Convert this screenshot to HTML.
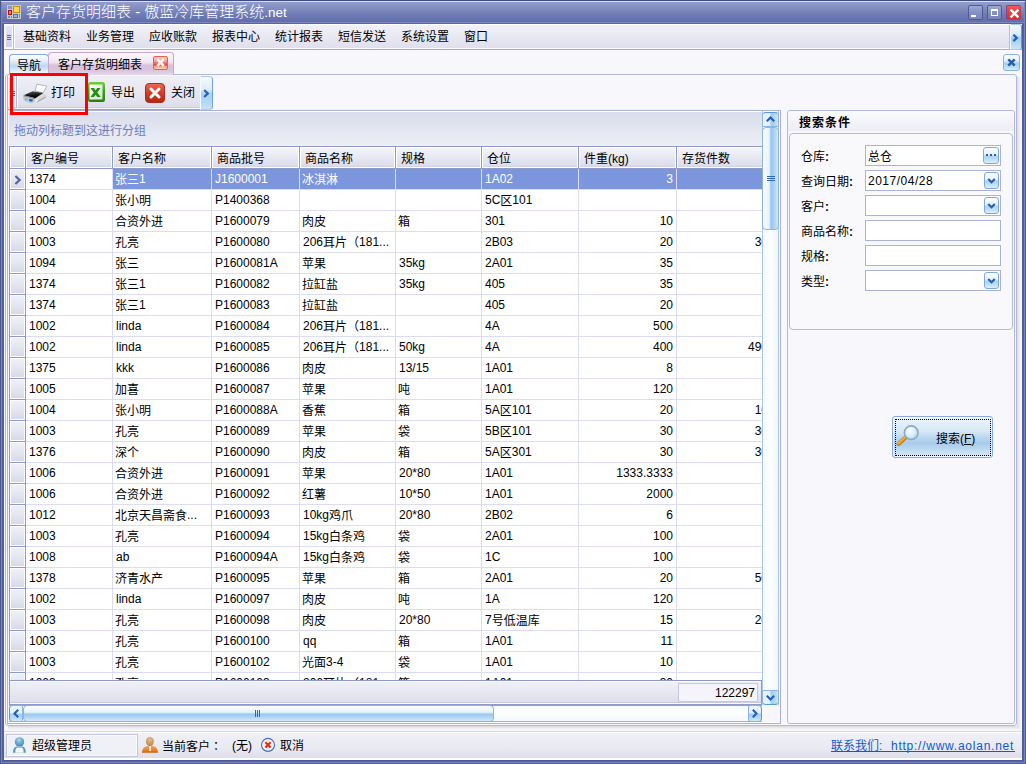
<!DOCTYPE html>
<html lang="zh-CN"><head><meta charset="utf-8"><title>客户存货明细表 - 傲蓝冷库管理系统.net</title>
<style>
*{box-sizing:border-box;margin:0;padding:0}
html,body{width:1026px;height:764px;overflow:hidden}
body{position:relative;background:#6774ae;font-family:"Liberation Sans","Noto Sans CJK SC",sans-serif;font-size:12px;color:#000;line-height:12px}
div,span,a,svg{position:absolute;white-space:nowrap}
.t{line-height:14px;height:14px}
#frame{left:0;top:0;width:1026px;height:764px;background:#525fa1}
#tb{left:0;top:0;width:1026px;height:24px;background:linear-gradient(#3d4a85 0,#3d4a85 1px,#d8dcee 1px,#d8dcee 2px,#939dc9 2px,#838ec0 8px,#7782b8 12px,#6c78b1 16px,#6470ae 21px,#6470ae 22px,#7a86bc 22px,#7a86bc 23px,#5865a4 23px)}
#title{left:26px;top:3px;font-size:15px;color:#fff;line-height:18px;font-weight:300}
.tbtn{top:5px;width:15px;height:15px;border-radius:2px;border:1px solid #4f5b98;background:linear-gradient(#9ea8d3,#8590c3 50%,#7783ba)}
.hd{background:linear-gradient(#f4f4fa,#e8e9f3 45%,#dddfec 90%,#cfd2e4);border:1px solid #fff}
.c{line-height:14px;height:14px;top:3px}
.k{position:relative;top:1px}
.row{left:10px;width:752px;height:21px}
.ind{left:0;top:0;width:15px;height:20px;background:linear-gradient(#eff0f7,#e4e6f1 50%,#d7d9e8);border:1px solid #fcfcfe}
.inp{background:#fff;border:1px solid #aab2d8;width:136px;height:20px;left:865px}
.ddb{border:1px solid #7fa8dc;border-radius:3px;background:linear-gradient(#fcfeff,#e2f1fc 45%,#a9d3f3 55%,#c4e1f7 80%,#dceefa)}
</style></head><body>
<div id="frame"></div><div id="tb"></div>
<div style="left:0px;top:0px;width:1px;height:764px;background:#4a568e"></div>
<div style="left:1px;top:2px;width:1px;height:761px;background:#7a86bc"></div>
<div style="left:1022px;top:24px;width:1px;height:737px;background:#505c98"></div>
<div style="left:1024px;top:2px;width:1px;height:761px;background:#7783bb"></div>
<div style="left:1025px;top:0px;width:1px;height:764px;background:#4f5b94"></div>
<div style="left:2px;top:760px;width:1021px;height:1px;background:#505c98"></div>
<div style="left:2px;top:762px;width:1023px;height:1px;background:#7884bb"></div>
<div style="left:0px;top:763px;width:1026px;height:1px;background:#4f5b94"></div>
<svg style="left:7px;top:5px" width="14" height="14" viewBox="0 0 14 14">
<rect x="0" y="0" width="14" height="14" fill="#c9c9c5"/>
<rect x="1" y="1" width="4" height="3" fill="#8a94c4"/>
<rect x="6" y="1" width="7" height="7" fill="#c99300"/><rect x="7" y="2" width="5" height="5" fill="#ffd54a"/>
<rect x="1" y="5" width="4" height="5" fill="#b81206"/><rect x="2" y="6" width="2" height="3" fill="#f07a72"/>
<rect x="6" y="9" width="5" height="4" fill="#3a78d8"/><rect x="7" y="10" width="3" height="2" fill="#8db8f6"/>
<rect x="1" y="11" width="2" height="2" fill="#7f8abd"/><rect x="4" y="11" width="1" height="2" fill="#7f8abd"/><rect x="12" y="9" width="1" height="4" fill="#7f8abd"/>
</svg>
<div id="title">客户存货明细表 - 傲蓝冷库管理系统<span style="position:static;font-size:13.5px">.net</span></div>
<div class="tbtn" style="left:968px"><div style="left:2px;top:9px;width:5px;height:2px;background:#fff"></div></div>
<div class="tbtn" style="left:987px"><div style="left:3px;top:3px;width:7px;height:7px;border:1px solid #fff;border-top-width:2px"></div></div>
<div class="tbtn" style="left:1006px;background:linear-gradient(#f25858,#e83c3c 50%,#dc2c2c);border-color:#7a4a80 #b04058 #c04050 #7a4a80">
<svg style="left:2px;top:2px" width="11" height="11" viewBox="0 0 11 11"><path d="M1.6 1.6 L9.4 9.4 M9.4 1.6 L1.6 9.4" stroke="#fff" stroke-width="2.3"/></svg></div>
<div style="left:4px;top:24px;width:1018px;height:736px;background:#f8f8fc"></div>
<div style="left:4px;top:24px;width:1018px;height:25px;background:linear-gradient(#f1f1f8,#dfe0ec);border-top:1px solid #fff;border-bottom:1px solid #fbfbfe"></div>
<div style="left:4px;top:49px;width:1018px;height:1px;background:#a3abd2"></div>
<div style="left:4px;top:25px;width:10px;height:23px;background:linear-gradient(#e6e7f2,#cfd2e6);border:2px solid #f6f6fb;border-top-width:1px;border-bottom-width:1px"></div>
<div style="left:7px;top:35px;width:4px;height:1px;background:#5d67a8;box-shadow:0 2px 0 #5d67a8,0 4px 0 #5d67a8"></div>
<div style="left:13px;top:25px;width:1px;height:24px;background:#b9bdd9"></div>
<div style="left:14px;top:25px;width:1px;height:24px;background:#fff"></div>
<div class="t" style="left:23px;top:30px;">基础资料</div>
<div class="t" style="left:86px;top:30px;">业务管理</div>
<div class="t" style="left:149px;top:30px;">应收账款</div>
<div class="t" style="left:212px;top:30px;">报表中心</div>
<div class="t" style="left:275px;top:30px;">统计报表</div>
<div class="t" style="left:338px;top:30px;">短信发送</div>
<div class="t" style="left:401px;top:30px;">系统设置</div>
<div class="t" style="left:464px;top:30px;">窗口</div>
<div style="left:1009px;top:25px;width:1px;height:24px;background:#b9bdd9"></div>
<div style="left:1010px;top:24px;width:12px;height:26px;border-radius:0 3px 3px 0;background:linear-gradient(#f4f9fe,#d8eaf9 40%,#9fcef0 55%,#b4d9f4 80%,#cfe6f8);border:1px solid #a9cbee;border-left-color:#eef6fd;border-right-color:#5f9adc"></div>
<svg style="left:1012px;top:34px" width="7" height="8" viewBox="0 0 7 8"><path d="M1.4 0.7 L4.8 3.9 L1.4 7.1" fill="none" stroke="#2660b4" stroke-width="2.2"/></svg>
<div style="left:5px;top:74px;width:1012px;height:652px;border:1px solid #b4b9d8;border-radius:3px;background:#f8f8fc"></div>
<div style="left:1017px;top:77px;width:4px;height:651px;background:linear-gradient(90deg,#d9d9dd,#ececf0 50%,#f8f8fb)"></div>
<div style="left:8px;top:726px;width:1012px;height:4px;background:linear-gradient(#d9d9dd,#ececf0 50%,#f8f8fb)"></div>
<div style="left:1017px;top:726px;width:4px;height:4px;background:radial-gradient(circle at 0 0,#d9d9dd,#f0f0f3 60%,#f8f8fb 100%)"></div>
<div style="left:7px;top:76px;width:1px;height:648px;background:#aeb4d6"></div>
<div style="left:7px;top:723px;width:3px;height:1px;background:#aeb4d6"></div>
<div style="left:9px;top:54px;width:40px;height:20px;border:1px solid #86a8d6;border-bottom:0;border-radius:4px 4px 0 0;background:linear-gradient(#ffffff,#e4f0fa 30%,#bcd8f0 58%,#dcecf9 82%,#fbfdff)"></div>
<div class="t" style="left:17px;top:59px;">导航</div>
<div style="left:48px;top:52px;width:126px;height:23px;border:1px solid #c9a6cf;border-bottom:0;border-radius:4px 4px 0 0;background:linear-gradient(#fbf8fb,#f0e6f2 42%,#d8c1dc 56%,#d9c5de 80%,#e6d8e9)"></div>
<div class="t" style="left:58px;top:58px;">客户存货明细表</div>
<div style="left:153px;top:56px;width:15px;height:14px;border:1px solid #e0624a;border-radius:2px;background:linear-gradient(#fdd0cc,#f79088 40%,#f0402c 66%,#f8a080 78%,#fcd4b8)"></div>
<svg style="left:156px;top:58px" width="9" height="9" viewBox="0 0 9 9"><path d="M1.2 1.2 L7.8 7.8 M7.8 1.2 L1.2 7.8" stroke="#fff" stroke-width="2.6"/></svg>
<div style="left:1003px;top:54px;width:17px;height:17px;border:1px solid #86b2e4;border-radius:3px;background:linear-gradient(#fcfeff,#dceefb 42%,#a2d0f1 55%,#bcddf5 80%,#d8ecfa)"></div>
<svg style="left:1007px;top:58px" width="9" height="9" viewBox="0 0 9 9"><path d="M1.3 1.3 L7.7 7.7 M7.7 1.3 L1.3 7.7" stroke="#245cae" stroke-width="2.5"/></svg>
<div style="left:8px;top:76px;width:192px;height:34px;background:linear-gradient(#efeff7,#e4e5f0 60%,#dcdde9);border-bottom:1px solid #9aa1cc"></div>
<div style="left:8px;top:107px;width:192px;height:1px;background:#c9cce2"></div>
<div style="left:8px;top:108px;width:192px;height:1px;background:#fbfbfe"></div>
<div style="left:8px;top:76px;width:9px;height:31px;background:#f1f1f8;border:1px solid #fafafd"></div>
<div style="left:9px;top:78px;width:1px;height:28px;background:#c5c9e2"></div>
<div style="left:13px;top:91px;width:2px;height:1px;background:#4a58a0;box-shadow:0 2px 0 #4a58a0,0 4px 0 #4a58a0"></div>
<div style="left:16px;top:76px;width:1px;height:32px;background:#b4b9d8"></div>
<div style="left:17px;top:76px;width:1px;height:32px;background:#fbfbfe"></div>
<div style="left:200px;top:76px;width:13px;height:34px;border:1px solid #a9cbee;border-left-color:#f4f9fe;border-right-color:#6fa2de;border-radius:0 4px 4px 0;background:linear-gradient(#f6fafe,#dcecfa 40%,#a6d0f0 52%,#b4d8f3 80%,#c8e3f7)"></div>
<svg style="left:203px;top:89px" width="7" height="9" viewBox="0 0 7 9"><path d="M1.2 1 L4.8 4.5 L1.2 8" fill="none" stroke="#2660b4" stroke-width="2.2"/></svg>
<svg style="left:18px;top:80px" width="34" height="26" viewBox="0 0 34 26">
<defs><linearGradient id="pk" x1="0" y1="0" x2="0.3" y2="1"><stop offset="0" stop-color="#6a6a6a"/><stop offset="0.6" stop-color="#1a1a1a"/><stop offset="1" stop-color="#000"/></linearGradient>
<linearGradient id="pb" x1="0" y1="0" x2="1" y2="0"><stop offset="0" stop-color="#4a9af0"/><stop offset="0.45" stop-color="#9adcd0"/><stop offset="0.55" stop-color="#2a9a4a"/><stop offset="0.7" stop-color="#0a5ad8"/><stop offset="1" stop-color="#2a7ae8"/></linearGradient></defs>
<path d="M18.9 4.2 L28.9 6.1 L25.2 12.8 L17 10.9 Z" fill="#fbfbfb" stroke="#a8a8a8" stroke-width="0.8"/>
<path d="M5.1 16 L17 19 L16.7 21.8 L12.9 23.6 L5.6 20.5 Z" fill="#c8c8c8"/>
<path d="M17 19 L25.2 12.9 L27.9 14.3 L27.9 17.7 L19 22.5 L16.8 21.2 Z" fill="#dadada"/>
<path d="M19 22.5 L27.9 17.7 L27.9 16.2 L19 20.8 Z" fill="#b0b0b0"/>
<path d="M5.6 15.3 L14.6 11.2 L25.2 12.9 L17.3 18.2 Z" fill="url(#pk)"/>
<path d="M5.6 15.3 L17.3 18.2 L17 19.3 L5.1 16.2 Z" fill="#8a8a8a"/>
<path d="M6.8 18.2 L15 19.6 L14.3 21.8 L7.5 20.3 Z" fill="url(#pb)"/>
<path d="M17.3 20.4 L19.6 19.2 L19.6 21 L18 21.8 Z" fill="#fff"/>
</svg>
<div class="t" style="left:51px;top:86px;">打印</div>
<svg style="left:88px;top:82px" width="17" height="20" viewBox="0 0 17 20">
<defs><linearGradient id="gg" x1="0" y1="0" x2="0" y2="1"><stop offset="0" stop-color="#72d03c"/><stop offset="0.5" stop-color="#3c9c18"/><stop offset="1" stop-color="#2a7e10"/></linearGradient>
<linearGradient id="wg" x1="0" y1="0" x2="1" y2="1"><stop offset="0" stop-color="#ffffff"/><stop offset="1" stop-color="#d4e0d0"/></linearGradient></defs>
<rect x="0" y="0" width="17" height="20" rx="2.5" fill="url(#gg)"/>
<rect x="1.5" y="2.5" width="13" height="15" fill="url(#wg)"/>
<path d="M2.5 6 L6 6 L7.6 8.4 L9.2 6 L12.5 6 L9.3 10.5 L12.7 15 L9.2 15 L7.6 12.6 L6 15 L2.5 15 L5.8 10.5 Z" fill="#23900c"/>
</svg>
<div class="t" style="left:111px;top:86px;">导出</div>
<svg style="left:145px;top:83px" width="20" height="20" viewBox="0 0 20 20">
<defs><linearGradient id="rg" x1="0" y1="0" x2="0" y2="1"><stop offset="0" stop-color="#ec6a54"/><stop offset="0.5" stop-color="#d23c24"/><stop offset="1" stop-color="#b42410"/></linearGradient></defs>
<rect x="0.5" y="0.5" width="19" height="19" rx="3.5" fill="url(#rg)" stroke="#a83020"/>
<path d="M6 6 L14 14 M14 6 L6 14" stroke="#fff" stroke-width="3" stroke-linecap="round"/>
</svg>
<div class="t" style="left:171px;top:86px;">关闭</div>
<div style="left:10px;top:73px;width:78px;height:42px;border:3px solid #ff0000;z-index:10"></div>
<div style="left:9px;top:110px;width:772px;height:614px;border:1px solid #a9b1d8;border-left:0;background:#fff"></div>
<div style="left:9px;top:146px;width:1px;height:559px;background:#8f9aca"></div>
<div style="left:9px;top:112px;width:753px;height:34px;background:linear-gradient(#d9dcea,#e4e6f1 55%,#eeeff6)"></div>
<div class="t" style="left:14px;top:124px;color:#6e7cba">拖动列标题到这进行分组</div>
<div style="left:10px;top:146px;width:752px;height:23px;background:#fff;border-top:1px solid #8f9aca;border-bottom:1px solid #8f9aca;overflow:hidden"><div class="hd" style="left:0;top:0;width:15px;height:21px"></div><div style="left:15px;top:0;width:1px;height:21px;background:#8f9aca"></div><div class="hd" style="left:16px;top:0;width:86px;height:21px"></div><div class="c" style="left:21px;top:5px">客户编号</div><div style="left:102px;top:0;width:1px;height:21px;background:#8f9aca"></div><div class="hd" style="left:103px;top:0;width:98px;height:21px"></div><div class="c" style="left:108px;top:5px">客户名称</div><div style="left:201px;top:0;width:1px;height:21px;background:#8f9aca"></div><div class="hd" style="left:202px;top:0;width:87px;height:21px"></div><div class="c" style="left:207px;top:5px">商品批号</div><div style="left:289px;top:0;width:1px;height:21px;background:#8f9aca"></div><div class="hd" style="left:290px;top:0;width:95px;height:21px"></div><div class="c" style="left:295px;top:5px">商品名称</div><div style="left:385px;top:0;width:1px;height:21px;background:#8f9aca"></div><div class="hd" style="left:386px;top:0;width:85px;height:21px"></div><div class="c" style="left:391px;top:5px">规格</div><div style="left:471px;top:0;width:1px;height:21px;background:#8f9aca"></div><div class="hd" style="left:472px;top:0;width:96px;height:21px"></div><div class="c" style="left:477px;top:5px">仓位</div><div style="left:568px;top:0;width:1px;height:21px;background:#8f9aca"></div><div class="hd" style="left:569px;top:0;width:97px;height:21px"></div><div class="c" style="left:574px;top:5px">件重(kg)</div><div style="left:666px;top:0;width:1px;height:21px;background:#8f9aca"></div><div class="hd" style="left:667px;top:0;width:94px;height:21px"></div><div class="c" style="left:672px;top:5px">存货件数</div></div>
<div style="left:10px;top:169px;width:752px;height:511px;overflow:hidden;background:#fff">
<div class="row" style="left:0;top:0px"><div class="ind"></div><div style="left:15px;top:0;width:1px;height:21px;background:#8f9aca"></div><svg style="left:4px;top:6px" width="8" height="10" viewBox="0 0 8 10"><path d="M1.4 1 L5.6 5 L1.4 9" fill="none" stroke="#5560a6" stroke-width="2.2"/></svg><div style="left:103px;top:0;width:650px;height:20px;background:#7b96dc"></div><div class="c" style="left:19px;width:82px;overflow:hidden;color:#000">1374</div><div style="left:102px;top:0;width:1px;height:21px;background:#dcdcf6"></div><div class="c" style="left:105px;width:95px;overflow:hidden;color:#fff"><span class="k">张三</span>1</div><div style="left:201px;top:0;width:1px;height:21px;background:#dcdcf6"></div><div class="c" style="left:205px;width:83px;overflow:hidden;color:#fff">J1600001</div><div style="left:289px;top:0;width:1px;height:21px;background:#dcdcf6"></div><div class="c" style="left:292px;width:92px;overflow:hidden;color:#fff"><span class="k">冰淇淋</span></div><div style="left:385px;top:0;width:1px;height:21px;background:#dcdcf6"></div><div class="c" style="left:389px;width:81px;overflow:hidden;color:#fff"></div><div style="left:471px;top:0;width:1px;height:21px;background:#dcdcf6"></div><div class="c" style="left:475px;width:92px;overflow:hidden;color:#fff">1A02</div><div style="left:568px;top:0;width:1px;height:21px;background:#dcdcf6"></div><div class="c" style="left:569px;width:94px;text-align:right;color:#fff">3</div><div style="left:666px;top:0;width:1px;height:21px;background:#dcdcf6"></div><div class="c" style="left:667px;width:91px;text-align:right;color:#fff"></div><div style="left:16px;top:20px;width:737px;height:1px;background:#dcdcf6"></div><div style="left:0px;top:20px;width:15px;height:1px;background:#8f9aca"></div></div>
<div class="row" style="left:0;top:21px"><div class="ind"></div><div style="left:15px;top:0;width:1px;height:21px;background:#8f9aca"></div><div class="c" style="left:19px;width:82px;overflow:hidden;color:#000">1004</div><div style="left:102px;top:0;width:1px;height:21px;background:#dcdcf6"></div><div class="c" style="left:105px;width:95px;overflow:hidden;color:#000"><span class="k">张小明</span></div><div style="left:201px;top:0;width:1px;height:21px;background:#dcdcf6"></div><div class="c" style="left:205px;width:83px;overflow:hidden;color:#000">P1400368</div><div style="left:289px;top:0;width:1px;height:21px;background:#dcdcf6"></div><div class="c" style="left:293px;width:91px;overflow:hidden;color:#000"></div><div style="left:385px;top:0;width:1px;height:21px;background:#dcdcf6"></div><div class="c" style="left:389px;width:81px;overflow:hidden;color:#000"></div><div style="left:471px;top:0;width:1px;height:21px;background:#dcdcf6"></div><div class="c" style="left:475px;width:92px;overflow:hidden;color:#000">5C<span class="k">区</span>101</div><div style="left:568px;top:0;width:1px;height:21px;background:#dcdcf6"></div><div class="c" style="left:569px;width:94px;text-align:right;color:#000"></div><div style="left:666px;top:0;width:1px;height:21px;background:#dcdcf6"></div><div class="c" style="left:667px;width:91px;text-align:right;color:#000"></div><div style="left:16px;top:20px;width:737px;height:1px;background:#dcdcf6"></div><div style="left:0px;top:20px;width:15px;height:1px;background:#8f9aca"></div></div>
<div class="row" style="left:0;top:42px"><div class="ind"></div><div style="left:15px;top:0;width:1px;height:21px;background:#8f9aca"></div><div class="c" style="left:19px;width:82px;overflow:hidden;color:#000">1006</div><div style="left:102px;top:0;width:1px;height:21px;background:#dcdcf6"></div><div class="c" style="left:105px;width:95px;overflow:hidden;color:#000"><span class="k">合资外进</span></div><div style="left:201px;top:0;width:1px;height:21px;background:#dcdcf6"></div><div class="c" style="left:205px;width:83px;overflow:hidden;color:#000">P1600079</div><div style="left:289px;top:0;width:1px;height:21px;background:#dcdcf6"></div><div class="c" style="left:292px;width:92px;overflow:hidden;color:#000"><span class="k">肉皮</span></div><div style="left:385px;top:0;width:1px;height:21px;background:#dcdcf6"></div><div class="c" style="left:388px;width:82px;overflow:hidden;color:#000"><span class="k">箱</span></div><div style="left:471px;top:0;width:1px;height:21px;background:#dcdcf6"></div><div class="c" style="left:475px;width:92px;overflow:hidden;color:#000">301</div><div style="left:568px;top:0;width:1px;height:21px;background:#dcdcf6"></div><div class="c" style="left:569px;width:94px;text-align:right;color:#000">10</div><div style="left:666px;top:0;width:1px;height:21px;background:#dcdcf6"></div><div class="c" style="left:667px;width:91px;text-align:right;color:#000"></div><div style="left:16px;top:20px;width:737px;height:1px;background:#dcdcf6"></div><div style="left:0px;top:20px;width:15px;height:1px;background:#8f9aca"></div></div>
<div class="row" style="left:0;top:63px"><div class="ind"></div><div style="left:15px;top:0;width:1px;height:21px;background:#8f9aca"></div><div class="c" style="left:19px;width:82px;overflow:hidden;color:#000">1003</div><div style="left:102px;top:0;width:1px;height:21px;background:#dcdcf6"></div><div class="c" style="left:105px;width:95px;overflow:hidden;color:#000"><span class="k">孔亮</span></div><div style="left:201px;top:0;width:1px;height:21px;background:#dcdcf6"></div><div class="c" style="left:205px;width:83px;overflow:hidden;color:#000">P1600080</div><div style="left:289px;top:0;width:1px;height:21px;background:#dcdcf6"></div><div class="c" style="left:293px;width:91px;overflow:hidden;color:#000">206<span class="k">耳片（</span>181...</div><div style="left:385px;top:0;width:1px;height:21px;background:#dcdcf6"></div><div class="c" style="left:389px;width:81px;overflow:hidden;color:#000"></div><div style="left:471px;top:0;width:1px;height:21px;background:#dcdcf6"></div><div class="c" style="left:475px;width:92px;overflow:hidden;color:#000">2B03</div><div style="left:568px;top:0;width:1px;height:21px;background:#dcdcf6"></div><div class="c" style="left:569px;width:94px;text-align:right;color:#000">20</div><div style="left:666px;top:0;width:1px;height:21px;background:#dcdcf6"></div><div class="c" style="left:667px;width:91px;text-align:right;color:#000">30</div><div style="left:16px;top:20px;width:737px;height:1px;background:#dcdcf6"></div><div style="left:0px;top:20px;width:15px;height:1px;background:#8f9aca"></div></div>
<div class="row" style="left:0;top:84px"><div class="ind"></div><div style="left:15px;top:0;width:1px;height:21px;background:#8f9aca"></div><div class="c" style="left:19px;width:82px;overflow:hidden;color:#000">1094</div><div style="left:102px;top:0;width:1px;height:21px;background:#dcdcf6"></div><div class="c" style="left:105px;width:95px;overflow:hidden;color:#000"><span class="k">张三</span></div><div style="left:201px;top:0;width:1px;height:21px;background:#dcdcf6"></div><div class="c" style="left:205px;width:83px;overflow:hidden;color:#000">P1600081A</div><div style="left:289px;top:0;width:1px;height:21px;background:#dcdcf6"></div><div class="c" style="left:292px;width:92px;overflow:hidden;color:#000"><span class="k">苹果</span></div><div style="left:385px;top:0;width:1px;height:21px;background:#dcdcf6"></div><div class="c" style="left:389px;width:81px;overflow:hidden;color:#000">35kg</div><div style="left:471px;top:0;width:1px;height:21px;background:#dcdcf6"></div><div class="c" style="left:475px;width:92px;overflow:hidden;color:#000">2A01</div><div style="left:568px;top:0;width:1px;height:21px;background:#dcdcf6"></div><div class="c" style="left:569px;width:94px;text-align:right;color:#000">35</div><div style="left:666px;top:0;width:1px;height:21px;background:#dcdcf6"></div><div class="c" style="left:667px;width:91px;text-align:right;color:#000"></div><div style="left:16px;top:20px;width:737px;height:1px;background:#dcdcf6"></div><div style="left:0px;top:20px;width:15px;height:1px;background:#8f9aca"></div></div>
<div class="row" style="left:0;top:105px"><div class="ind"></div><div style="left:15px;top:0;width:1px;height:21px;background:#8f9aca"></div><div class="c" style="left:19px;width:82px;overflow:hidden;color:#000">1374</div><div style="left:102px;top:0;width:1px;height:21px;background:#dcdcf6"></div><div class="c" style="left:105px;width:95px;overflow:hidden;color:#000"><span class="k">张三</span>1</div><div style="left:201px;top:0;width:1px;height:21px;background:#dcdcf6"></div><div class="c" style="left:205px;width:83px;overflow:hidden;color:#000">P1600082</div><div style="left:289px;top:0;width:1px;height:21px;background:#dcdcf6"></div><div class="c" style="left:292px;width:92px;overflow:hidden;color:#000"><span class="k">拉缸盐</span></div><div style="left:385px;top:0;width:1px;height:21px;background:#dcdcf6"></div><div class="c" style="left:389px;width:81px;overflow:hidden;color:#000">35kg</div><div style="left:471px;top:0;width:1px;height:21px;background:#dcdcf6"></div><div class="c" style="left:475px;width:92px;overflow:hidden;color:#000">405</div><div style="left:568px;top:0;width:1px;height:21px;background:#dcdcf6"></div><div class="c" style="left:569px;width:94px;text-align:right;color:#000">35</div><div style="left:666px;top:0;width:1px;height:21px;background:#dcdcf6"></div><div class="c" style="left:667px;width:91px;text-align:right;color:#000"></div><div style="left:16px;top:20px;width:737px;height:1px;background:#dcdcf6"></div><div style="left:0px;top:20px;width:15px;height:1px;background:#8f9aca"></div></div>
<div class="row" style="left:0;top:126px"><div class="ind"></div><div style="left:15px;top:0;width:1px;height:21px;background:#8f9aca"></div><div class="c" style="left:19px;width:82px;overflow:hidden;color:#000">1374</div><div style="left:102px;top:0;width:1px;height:21px;background:#dcdcf6"></div><div class="c" style="left:105px;width:95px;overflow:hidden;color:#000"><span class="k">张三</span>1</div><div style="left:201px;top:0;width:1px;height:21px;background:#dcdcf6"></div><div class="c" style="left:205px;width:83px;overflow:hidden;color:#000">P1600083</div><div style="left:289px;top:0;width:1px;height:21px;background:#dcdcf6"></div><div class="c" style="left:292px;width:92px;overflow:hidden;color:#000"><span class="k">拉缸盐</span></div><div style="left:385px;top:0;width:1px;height:21px;background:#dcdcf6"></div><div class="c" style="left:389px;width:81px;overflow:hidden;color:#000"></div><div style="left:471px;top:0;width:1px;height:21px;background:#dcdcf6"></div><div class="c" style="left:475px;width:92px;overflow:hidden;color:#000">405</div><div style="left:568px;top:0;width:1px;height:21px;background:#dcdcf6"></div><div class="c" style="left:569px;width:94px;text-align:right;color:#000">20</div><div style="left:666px;top:0;width:1px;height:21px;background:#dcdcf6"></div><div class="c" style="left:667px;width:91px;text-align:right;color:#000"></div><div style="left:16px;top:20px;width:737px;height:1px;background:#dcdcf6"></div><div style="left:0px;top:20px;width:15px;height:1px;background:#8f9aca"></div></div>
<div class="row" style="left:0;top:147px"><div class="ind"></div><div style="left:15px;top:0;width:1px;height:21px;background:#8f9aca"></div><div class="c" style="left:19px;width:82px;overflow:hidden;color:#000">1002</div><div style="left:102px;top:0;width:1px;height:21px;background:#dcdcf6"></div><div class="c" style="left:106px;width:94px;overflow:hidden;color:#000">linda</div><div style="left:201px;top:0;width:1px;height:21px;background:#dcdcf6"></div><div class="c" style="left:205px;width:83px;overflow:hidden;color:#000">P1600084</div><div style="left:289px;top:0;width:1px;height:21px;background:#dcdcf6"></div><div class="c" style="left:293px;width:91px;overflow:hidden;color:#000">206<span class="k">耳片（</span>181...</div><div style="left:385px;top:0;width:1px;height:21px;background:#dcdcf6"></div><div class="c" style="left:389px;width:81px;overflow:hidden;color:#000"></div><div style="left:471px;top:0;width:1px;height:21px;background:#dcdcf6"></div><div class="c" style="left:475px;width:92px;overflow:hidden;color:#000">4A</div><div style="left:568px;top:0;width:1px;height:21px;background:#dcdcf6"></div><div class="c" style="left:569px;width:94px;text-align:right;color:#000">500</div><div style="left:666px;top:0;width:1px;height:21px;background:#dcdcf6"></div><div class="c" style="left:667px;width:91px;text-align:right;color:#000"></div><div style="left:16px;top:20px;width:737px;height:1px;background:#dcdcf6"></div><div style="left:0px;top:20px;width:15px;height:1px;background:#8f9aca"></div></div>
<div class="row" style="left:0;top:168px"><div class="ind"></div><div style="left:15px;top:0;width:1px;height:21px;background:#8f9aca"></div><div class="c" style="left:19px;width:82px;overflow:hidden;color:#000">1002</div><div style="left:102px;top:0;width:1px;height:21px;background:#dcdcf6"></div><div class="c" style="left:106px;width:94px;overflow:hidden;color:#000">linda</div><div style="left:201px;top:0;width:1px;height:21px;background:#dcdcf6"></div><div class="c" style="left:205px;width:83px;overflow:hidden;color:#000">P1600085</div><div style="left:289px;top:0;width:1px;height:21px;background:#dcdcf6"></div><div class="c" style="left:293px;width:91px;overflow:hidden;color:#000">206<span class="k">耳片（</span>181...</div><div style="left:385px;top:0;width:1px;height:21px;background:#dcdcf6"></div><div class="c" style="left:389px;width:81px;overflow:hidden;color:#000">50kg</div><div style="left:471px;top:0;width:1px;height:21px;background:#dcdcf6"></div><div class="c" style="left:475px;width:92px;overflow:hidden;color:#000">4A</div><div style="left:568px;top:0;width:1px;height:21px;background:#dcdcf6"></div><div class="c" style="left:569px;width:94px;text-align:right;color:#000">400</div><div style="left:666px;top:0;width:1px;height:21px;background:#dcdcf6"></div><div class="c" style="left:667px;width:91px;text-align:right;color:#000">490</div><div style="left:16px;top:20px;width:737px;height:1px;background:#dcdcf6"></div><div style="left:0px;top:20px;width:15px;height:1px;background:#8f9aca"></div></div>
<div class="row" style="left:0;top:189px"><div class="ind"></div><div style="left:15px;top:0;width:1px;height:21px;background:#8f9aca"></div><div class="c" style="left:19px;width:82px;overflow:hidden;color:#000">1375</div><div style="left:102px;top:0;width:1px;height:21px;background:#dcdcf6"></div><div class="c" style="left:106px;width:94px;overflow:hidden;color:#000">kkk</div><div style="left:201px;top:0;width:1px;height:21px;background:#dcdcf6"></div><div class="c" style="left:205px;width:83px;overflow:hidden;color:#000">P1600086</div><div style="left:289px;top:0;width:1px;height:21px;background:#dcdcf6"></div><div class="c" style="left:292px;width:92px;overflow:hidden;color:#000"><span class="k">肉皮</span></div><div style="left:385px;top:0;width:1px;height:21px;background:#dcdcf6"></div><div class="c" style="left:389px;width:81px;overflow:hidden;color:#000">13/15</div><div style="left:471px;top:0;width:1px;height:21px;background:#dcdcf6"></div><div class="c" style="left:475px;width:92px;overflow:hidden;color:#000">1A01</div><div style="left:568px;top:0;width:1px;height:21px;background:#dcdcf6"></div><div class="c" style="left:569px;width:94px;text-align:right;color:#000">8</div><div style="left:666px;top:0;width:1px;height:21px;background:#dcdcf6"></div><div class="c" style="left:667px;width:91px;text-align:right;color:#000"></div><div style="left:16px;top:20px;width:737px;height:1px;background:#dcdcf6"></div><div style="left:0px;top:20px;width:15px;height:1px;background:#8f9aca"></div></div>
<div class="row" style="left:0;top:210px"><div class="ind"></div><div style="left:15px;top:0;width:1px;height:21px;background:#8f9aca"></div><div class="c" style="left:19px;width:82px;overflow:hidden;color:#000">1005</div><div style="left:102px;top:0;width:1px;height:21px;background:#dcdcf6"></div><div class="c" style="left:105px;width:95px;overflow:hidden;color:#000"><span class="k">加喜</span></div><div style="left:201px;top:0;width:1px;height:21px;background:#dcdcf6"></div><div class="c" style="left:205px;width:83px;overflow:hidden;color:#000">P1600087</div><div style="left:289px;top:0;width:1px;height:21px;background:#dcdcf6"></div><div class="c" style="left:292px;width:92px;overflow:hidden;color:#000"><span class="k">苹果</span></div><div style="left:385px;top:0;width:1px;height:21px;background:#dcdcf6"></div><div class="c" style="left:388px;width:82px;overflow:hidden;color:#000"><span class="k">吨</span></div><div style="left:471px;top:0;width:1px;height:21px;background:#dcdcf6"></div><div class="c" style="left:475px;width:92px;overflow:hidden;color:#000">1A01</div><div style="left:568px;top:0;width:1px;height:21px;background:#dcdcf6"></div><div class="c" style="left:569px;width:94px;text-align:right;color:#000">120</div><div style="left:666px;top:0;width:1px;height:21px;background:#dcdcf6"></div><div class="c" style="left:667px;width:91px;text-align:right;color:#000"></div><div style="left:16px;top:20px;width:737px;height:1px;background:#dcdcf6"></div><div style="left:0px;top:20px;width:15px;height:1px;background:#8f9aca"></div></div>
<div class="row" style="left:0;top:231px"><div class="ind"></div><div style="left:15px;top:0;width:1px;height:21px;background:#8f9aca"></div><div class="c" style="left:19px;width:82px;overflow:hidden;color:#000">1004</div><div style="left:102px;top:0;width:1px;height:21px;background:#dcdcf6"></div><div class="c" style="left:105px;width:95px;overflow:hidden;color:#000"><span class="k">张小明</span></div><div style="left:201px;top:0;width:1px;height:21px;background:#dcdcf6"></div><div class="c" style="left:205px;width:83px;overflow:hidden;color:#000">P1600088A</div><div style="left:289px;top:0;width:1px;height:21px;background:#dcdcf6"></div><div class="c" style="left:292px;width:92px;overflow:hidden;color:#000"><span class="k">香蕉</span></div><div style="left:385px;top:0;width:1px;height:21px;background:#dcdcf6"></div><div class="c" style="left:388px;width:82px;overflow:hidden;color:#000"><span class="k">箱</span></div><div style="left:471px;top:0;width:1px;height:21px;background:#dcdcf6"></div><div class="c" style="left:475px;width:92px;overflow:hidden;color:#000">5A<span class="k">区</span>101</div><div style="left:568px;top:0;width:1px;height:21px;background:#dcdcf6"></div><div class="c" style="left:569px;width:94px;text-align:right;color:#000">20</div><div style="left:666px;top:0;width:1px;height:21px;background:#dcdcf6"></div><div class="c" style="left:667px;width:91px;text-align:right;color:#000">10</div><div style="left:16px;top:20px;width:737px;height:1px;background:#dcdcf6"></div><div style="left:0px;top:20px;width:15px;height:1px;background:#8f9aca"></div></div>
<div class="row" style="left:0;top:252px"><div class="ind"></div><div style="left:15px;top:0;width:1px;height:21px;background:#8f9aca"></div><div class="c" style="left:19px;width:82px;overflow:hidden;color:#000">1003</div><div style="left:102px;top:0;width:1px;height:21px;background:#dcdcf6"></div><div class="c" style="left:105px;width:95px;overflow:hidden;color:#000"><span class="k">孔亮</span></div><div style="left:201px;top:0;width:1px;height:21px;background:#dcdcf6"></div><div class="c" style="left:205px;width:83px;overflow:hidden;color:#000">P1600089</div><div style="left:289px;top:0;width:1px;height:21px;background:#dcdcf6"></div><div class="c" style="left:292px;width:92px;overflow:hidden;color:#000"><span class="k">苹果</span></div><div style="left:385px;top:0;width:1px;height:21px;background:#dcdcf6"></div><div class="c" style="left:388px;width:82px;overflow:hidden;color:#000"><span class="k">袋</span></div><div style="left:471px;top:0;width:1px;height:21px;background:#dcdcf6"></div><div class="c" style="left:475px;width:92px;overflow:hidden;color:#000">5B<span class="k">区</span>101</div><div style="left:568px;top:0;width:1px;height:21px;background:#dcdcf6"></div><div class="c" style="left:569px;width:94px;text-align:right;color:#000">30</div><div style="left:666px;top:0;width:1px;height:21px;background:#dcdcf6"></div><div class="c" style="left:667px;width:91px;text-align:right;color:#000">30</div><div style="left:16px;top:20px;width:737px;height:1px;background:#dcdcf6"></div><div style="left:0px;top:20px;width:15px;height:1px;background:#8f9aca"></div></div>
<div class="row" style="left:0;top:273px"><div class="ind"></div><div style="left:15px;top:0;width:1px;height:21px;background:#8f9aca"></div><div class="c" style="left:19px;width:82px;overflow:hidden;color:#000">1376</div><div style="left:102px;top:0;width:1px;height:21px;background:#dcdcf6"></div><div class="c" style="left:105px;width:95px;overflow:hidden;color:#000"><span class="k">深个</span></div><div style="left:201px;top:0;width:1px;height:21px;background:#dcdcf6"></div><div class="c" style="left:205px;width:83px;overflow:hidden;color:#000">P1600090</div><div style="left:289px;top:0;width:1px;height:21px;background:#dcdcf6"></div><div class="c" style="left:292px;width:92px;overflow:hidden;color:#000"><span class="k">肉皮</span></div><div style="left:385px;top:0;width:1px;height:21px;background:#dcdcf6"></div><div class="c" style="left:388px;width:82px;overflow:hidden;color:#000"><span class="k">箱</span></div><div style="left:471px;top:0;width:1px;height:21px;background:#dcdcf6"></div><div class="c" style="left:475px;width:92px;overflow:hidden;color:#000">5A<span class="k">区</span>301</div><div style="left:568px;top:0;width:1px;height:21px;background:#dcdcf6"></div><div class="c" style="left:569px;width:94px;text-align:right;color:#000">30</div><div style="left:666px;top:0;width:1px;height:21px;background:#dcdcf6"></div><div class="c" style="left:667px;width:91px;text-align:right;color:#000">30</div><div style="left:16px;top:20px;width:737px;height:1px;background:#dcdcf6"></div><div style="left:0px;top:20px;width:15px;height:1px;background:#8f9aca"></div></div>
<div class="row" style="left:0;top:294px"><div class="ind"></div><div style="left:15px;top:0;width:1px;height:21px;background:#8f9aca"></div><div class="c" style="left:19px;width:82px;overflow:hidden;color:#000">1006</div><div style="left:102px;top:0;width:1px;height:21px;background:#dcdcf6"></div><div class="c" style="left:105px;width:95px;overflow:hidden;color:#000"><span class="k">合资外进</span></div><div style="left:201px;top:0;width:1px;height:21px;background:#dcdcf6"></div><div class="c" style="left:205px;width:83px;overflow:hidden;color:#000">P1600091</div><div style="left:289px;top:0;width:1px;height:21px;background:#dcdcf6"></div><div class="c" style="left:292px;width:92px;overflow:hidden;color:#000"><span class="k">苹果</span></div><div style="left:385px;top:0;width:1px;height:21px;background:#dcdcf6"></div><div class="c" style="left:389px;width:81px;overflow:hidden;color:#000">20*80</div><div style="left:471px;top:0;width:1px;height:21px;background:#dcdcf6"></div><div class="c" style="left:475px;width:92px;overflow:hidden;color:#000">1A01</div><div style="left:568px;top:0;width:1px;height:21px;background:#dcdcf6"></div><div class="c" style="left:569px;width:94px;text-align:right;color:#000">1333.3333</div><div style="left:666px;top:0;width:1px;height:21px;background:#dcdcf6"></div><div class="c" style="left:667px;width:91px;text-align:right;color:#000"></div><div style="left:16px;top:20px;width:737px;height:1px;background:#dcdcf6"></div><div style="left:0px;top:20px;width:15px;height:1px;background:#8f9aca"></div></div>
<div class="row" style="left:0;top:315px"><div class="ind"></div><div style="left:15px;top:0;width:1px;height:21px;background:#8f9aca"></div><div class="c" style="left:19px;width:82px;overflow:hidden;color:#000">1006</div><div style="left:102px;top:0;width:1px;height:21px;background:#dcdcf6"></div><div class="c" style="left:105px;width:95px;overflow:hidden;color:#000"><span class="k">合资外进</span></div><div style="left:201px;top:0;width:1px;height:21px;background:#dcdcf6"></div><div class="c" style="left:205px;width:83px;overflow:hidden;color:#000">P1600092</div><div style="left:289px;top:0;width:1px;height:21px;background:#dcdcf6"></div><div class="c" style="left:292px;width:92px;overflow:hidden;color:#000"><span class="k">红薯</span></div><div style="left:385px;top:0;width:1px;height:21px;background:#dcdcf6"></div><div class="c" style="left:389px;width:81px;overflow:hidden;color:#000">10*50</div><div style="left:471px;top:0;width:1px;height:21px;background:#dcdcf6"></div><div class="c" style="left:475px;width:92px;overflow:hidden;color:#000">1A01</div><div style="left:568px;top:0;width:1px;height:21px;background:#dcdcf6"></div><div class="c" style="left:569px;width:94px;text-align:right;color:#000">2000</div><div style="left:666px;top:0;width:1px;height:21px;background:#dcdcf6"></div><div class="c" style="left:667px;width:91px;text-align:right;color:#000"></div><div style="left:16px;top:20px;width:737px;height:1px;background:#dcdcf6"></div><div style="left:0px;top:20px;width:15px;height:1px;background:#8f9aca"></div></div>
<div class="row" style="left:0;top:336px"><div class="ind"></div><div style="left:15px;top:0;width:1px;height:21px;background:#8f9aca"></div><div class="c" style="left:19px;width:82px;overflow:hidden;color:#000">1012</div><div style="left:102px;top:0;width:1px;height:21px;background:#dcdcf6"></div><div class="c" style="left:105px;width:95px;overflow:hidden;color:#000"><span class="k">北京天昌斋食</span>...</div><div style="left:201px;top:0;width:1px;height:21px;background:#dcdcf6"></div><div class="c" style="left:205px;width:83px;overflow:hidden;color:#000">P1600093</div><div style="left:289px;top:0;width:1px;height:21px;background:#dcdcf6"></div><div class="c" style="left:293px;width:91px;overflow:hidden;color:#000">10kg<span class="k">鸡爪</span></div><div style="left:385px;top:0;width:1px;height:21px;background:#dcdcf6"></div><div class="c" style="left:389px;width:81px;overflow:hidden;color:#000">20*80</div><div style="left:471px;top:0;width:1px;height:21px;background:#dcdcf6"></div><div class="c" style="left:475px;width:92px;overflow:hidden;color:#000">2B02</div><div style="left:568px;top:0;width:1px;height:21px;background:#dcdcf6"></div><div class="c" style="left:569px;width:94px;text-align:right;color:#000">6</div><div style="left:666px;top:0;width:1px;height:21px;background:#dcdcf6"></div><div class="c" style="left:667px;width:91px;text-align:right;color:#000"></div><div style="left:16px;top:20px;width:737px;height:1px;background:#dcdcf6"></div><div style="left:0px;top:20px;width:15px;height:1px;background:#8f9aca"></div></div>
<div class="row" style="left:0;top:357px"><div class="ind"></div><div style="left:15px;top:0;width:1px;height:21px;background:#8f9aca"></div><div class="c" style="left:19px;width:82px;overflow:hidden;color:#000">1003</div><div style="left:102px;top:0;width:1px;height:21px;background:#dcdcf6"></div><div class="c" style="left:105px;width:95px;overflow:hidden;color:#000"><span class="k">孔亮</span></div><div style="left:201px;top:0;width:1px;height:21px;background:#dcdcf6"></div><div class="c" style="left:205px;width:83px;overflow:hidden;color:#000">P1600094</div><div style="left:289px;top:0;width:1px;height:21px;background:#dcdcf6"></div><div class="c" style="left:293px;width:91px;overflow:hidden;color:#000">15kg<span class="k">白条鸡</span></div><div style="left:385px;top:0;width:1px;height:21px;background:#dcdcf6"></div><div class="c" style="left:388px;width:82px;overflow:hidden;color:#000"><span class="k">袋</span></div><div style="left:471px;top:0;width:1px;height:21px;background:#dcdcf6"></div><div class="c" style="left:475px;width:92px;overflow:hidden;color:#000">2A01</div><div style="left:568px;top:0;width:1px;height:21px;background:#dcdcf6"></div><div class="c" style="left:569px;width:94px;text-align:right;color:#000">100</div><div style="left:666px;top:0;width:1px;height:21px;background:#dcdcf6"></div><div class="c" style="left:667px;width:91px;text-align:right;color:#000"></div><div style="left:16px;top:20px;width:737px;height:1px;background:#dcdcf6"></div><div style="left:0px;top:20px;width:15px;height:1px;background:#8f9aca"></div></div>
<div class="row" style="left:0;top:378px"><div class="ind"></div><div style="left:15px;top:0;width:1px;height:21px;background:#8f9aca"></div><div class="c" style="left:19px;width:82px;overflow:hidden;color:#000">1008</div><div style="left:102px;top:0;width:1px;height:21px;background:#dcdcf6"></div><div class="c" style="left:106px;width:94px;overflow:hidden;color:#000">ab</div><div style="left:201px;top:0;width:1px;height:21px;background:#dcdcf6"></div><div class="c" style="left:205px;width:83px;overflow:hidden;color:#000">P1600094A</div><div style="left:289px;top:0;width:1px;height:21px;background:#dcdcf6"></div><div class="c" style="left:293px;width:91px;overflow:hidden;color:#000">15kg<span class="k">白条鸡</span></div><div style="left:385px;top:0;width:1px;height:21px;background:#dcdcf6"></div><div class="c" style="left:388px;width:82px;overflow:hidden;color:#000"><span class="k">袋</span></div><div style="left:471px;top:0;width:1px;height:21px;background:#dcdcf6"></div><div class="c" style="left:475px;width:92px;overflow:hidden;color:#000">1C</div><div style="left:568px;top:0;width:1px;height:21px;background:#dcdcf6"></div><div class="c" style="left:569px;width:94px;text-align:right;color:#000">100</div><div style="left:666px;top:0;width:1px;height:21px;background:#dcdcf6"></div><div class="c" style="left:667px;width:91px;text-align:right;color:#000"></div><div style="left:16px;top:20px;width:737px;height:1px;background:#dcdcf6"></div><div style="left:0px;top:20px;width:15px;height:1px;background:#8f9aca"></div></div>
<div class="row" style="left:0;top:399px"><div class="ind"></div><div style="left:15px;top:0;width:1px;height:21px;background:#8f9aca"></div><div class="c" style="left:19px;width:82px;overflow:hidden;color:#000">1378</div><div style="left:102px;top:0;width:1px;height:21px;background:#dcdcf6"></div><div class="c" style="left:105px;width:95px;overflow:hidden;color:#000"><span class="k">济青水产</span></div><div style="left:201px;top:0;width:1px;height:21px;background:#dcdcf6"></div><div class="c" style="left:205px;width:83px;overflow:hidden;color:#000">P1600095</div><div style="left:289px;top:0;width:1px;height:21px;background:#dcdcf6"></div><div class="c" style="left:292px;width:92px;overflow:hidden;color:#000"><span class="k">苹果</span></div><div style="left:385px;top:0;width:1px;height:21px;background:#dcdcf6"></div><div class="c" style="left:388px;width:82px;overflow:hidden;color:#000"><span class="k">箱</span></div><div style="left:471px;top:0;width:1px;height:21px;background:#dcdcf6"></div><div class="c" style="left:475px;width:92px;overflow:hidden;color:#000">2A01</div><div style="left:568px;top:0;width:1px;height:21px;background:#dcdcf6"></div><div class="c" style="left:569px;width:94px;text-align:right;color:#000">20</div><div style="left:666px;top:0;width:1px;height:21px;background:#dcdcf6"></div><div class="c" style="left:667px;width:91px;text-align:right;color:#000">50</div><div style="left:16px;top:20px;width:737px;height:1px;background:#dcdcf6"></div><div style="left:0px;top:20px;width:15px;height:1px;background:#8f9aca"></div></div>
<div class="row" style="left:0;top:420px"><div class="ind"></div><div style="left:15px;top:0;width:1px;height:21px;background:#8f9aca"></div><div class="c" style="left:19px;width:82px;overflow:hidden;color:#000">1002</div><div style="left:102px;top:0;width:1px;height:21px;background:#dcdcf6"></div><div class="c" style="left:106px;width:94px;overflow:hidden;color:#000">linda</div><div style="left:201px;top:0;width:1px;height:21px;background:#dcdcf6"></div><div class="c" style="left:205px;width:83px;overflow:hidden;color:#000">P1600097</div><div style="left:289px;top:0;width:1px;height:21px;background:#dcdcf6"></div><div class="c" style="left:292px;width:92px;overflow:hidden;color:#000"><span class="k">肉皮</span></div><div style="left:385px;top:0;width:1px;height:21px;background:#dcdcf6"></div><div class="c" style="left:388px;width:82px;overflow:hidden;color:#000"><span class="k">吨</span></div><div style="left:471px;top:0;width:1px;height:21px;background:#dcdcf6"></div><div class="c" style="left:475px;width:92px;overflow:hidden;color:#000">1A</div><div style="left:568px;top:0;width:1px;height:21px;background:#dcdcf6"></div><div class="c" style="left:569px;width:94px;text-align:right;color:#000">120</div><div style="left:666px;top:0;width:1px;height:21px;background:#dcdcf6"></div><div class="c" style="left:667px;width:91px;text-align:right;color:#000"></div><div style="left:16px;top:20px;width:737px;height:1px;background:#dcdcf6"></div><div style="left:0px;top:20px;width:15px;height:1px;background:#8f9aca"></div></div>
<div class="row" style="left:0;top:441px"><div class="ind"></div><div style="left:15px;top:0;width:1px;height:21px;background:#8f9aca"></div><div class="c" style="left:19px;width:82px;overflow:hidden;color:#000">1003</div><div style="left:102px;top:0;width:1px;height:21px;background:#dcdcf6"></div><div class="c" style="left:105px;width:95px;overflow:hidden;color:#000"><span class="k">孔亮</span></div><div style="left:201px;top:0;width:1px;height:21px;background:#dcdcf6"></div><div class="c" style="left:205px;width:83px;overflow:hidden;color:#000">P1600098</div><div style="left:289px;top:0;width:1px;height:21px;background:#dcdcf6"></div><div class="c" style="left:292px;width:92px;overflow:hidden;color:#000"><span class="k">肉皮</span></div><div style="left:385px;top:0;width:1px;height:21px;background:#dcdcf6"></div><div class="c" style="left:389px;width:81px;overflow:hidden;color:#000">20*80</div><div style="left:471px;top:0;width:1px;height:21px;background:#dcdcf6"></div><div class="c" style="left:475px;width:92px;overflow:hidden;color:#000">7<span class="k">号低温库</span></div><div style="left:568px;top:0;width:1px;height:21px;background:#dcdcf6"></div><div class="c" style="left:569px;width:94px;text-align:right;color:#000">15</div><div style="left:666px;top:0;width:1px;height:21px;background:#dcdcf6"></div><div class="c" style="left:667px;width:91px;text-align:right;color:#000">20</div><div style="left:16px;top:20px;width:737px;height:1px;background:#dcdcf6"></div><div style="left:0px;top:20px;width:15px;height:1px;background:#8f9aca"></div></div>
<div class="row" style="left:0;top:462px"><div class="ind"></div><div style="left:15px;top:0;width:1px;height:21px;background:#8f9aca"></div><div class="c" style="left:19px;width:82px;overflow:hidden;color:#000">1003</div><div style="left:102px;top:0;width:1px;height:21px;background:#dcdcf6"></div><div class="c" style="left:105px;width:95px;overflow:hidden;color:#000"><span class="k">孔亮</span></div><div style="left:201px;top:0;width:1px;height:21px;background:#dcdcf6"></div><div class="c" style="left:205px;width:83px;overflow:hidden;color:#000">P1600100</div><div style="left:289px;top:0;width:1px;height:21px;background:#dcdcf6"></div><div class="c" style="left:293px;width:91px;overflow:hidden;color:#000">qq</div><div style="left:385px;top:0;width:1px;height:21px;background:#dcdcf6"></div><div class="c" style="left:388px;width:82px;overflow:hidden;color:#000"><span class="k">箱</span></div><div style="left:471px;top:0;width:1px;height:21px;background:#dcdcf6"></div><div class="c" style="left:475px;width:92px;overflow:hidden;color:#000">1A01</div><div style="left:568px;top:0;width:1px;height:21px;background:#dcdcf6"></div><div class="c" style="left:569px;width:94px;text-align:right;color:#000">11</div><div style="left:666px;top:0;width:1px;height:21px;background:#dcdcf6"></div><div class="c" style="left:667px;width:91px;text-align:right;color:#000"></div><div style="left:16px;top:20px;width:737px;height:1px;background:#dcdcf6"></div><div style="left:0px;top:20px;width:15px;height:1px;background:#8f9aca"></div></div>
<div class="row" style="left:0;top:483px"><div class="ind"></div><div style="left:15px;top:0;width:1px;height:21px;background:#8f9aca"></div><div class="c" style="left:19px;width:82px;overflow:hidden;color:#000">1003</div><div style="left:102px;top:0;width:1px;height:21px;background:#dcdcf6"></div><div class="c" style="left:105px;width:95px;overflow:hidden;color:#000"><span class="k">孔亮</span></div><div style="left:201px;top:0;width:1px;height:21px;background:#dcdcf6"></div><div class="c" style="left:205px;width:83px;overflow:hidden;color:#000">P1600102</div><div style="left:289px;top:0;width:1px;height:21px;background:#dcdcf6"></div><div class="c" style="left:292px;width:92px;overflow:hidden;color:#000"><span class="k">光面</span>3-4</div><div style="left:385px;top:0;width:1px;height:21px;background:#dcdcf6"></div><div class="c" style="left:388px;width:82px;overflow:hidden;color:#000"><span class="k">袋</span></div><div style="left:471px;top:0;width:1px;height:21px;background:#dcdcf6"></div><div class="c" style="left:475px;width:92px;overflow:hidden;color:#000">1A01</div><div style="left:568px;top:0;width:1px;height:21px;background:#dcdcf6"></div><div class="c" style="left:569px;width:94px;text-align:right;color:#000">10</div><div style="left:666px;top:0;width:1px;height:21px;background:#dcdcf6"></div><div class="c" style="left:667px;width:91px;text-align:right;color:#000"></div><div style="left:16px;top:20px;width:737px;height:1px;background:#dcdcf6"></div><div style="left:0px;top:20px;width:15px;height:1px;background:#8f9aca"></div></div>
<div class="row" style="left:0;top:504px"><div class="ind"></div><div style="left:15px;top:0;width:1px;height:21px;background:#8f9aca"></div><div class="c" style="left:19px;width:82px;overflow:hidden;color:#000">1003</div><div style="left:102px;top:0;width:1px;height:21px;background:#dcdcf6"></div><div class="c" style="left:105px;width:95px;overflow:hidden;color:#000"><span class="k">孔亮</span></div><div style="left:201px;top:0;width:1px;height:21px;background:#dcdcf6"></div><div class="c" style="left:205px;width:83px;overflow:hidden;color:#000">P1600103</div><div style="left:289px;top:0;width:1px;height:21px;background:#dcdcf6"></div><div class="c" style="left:293px;width:91px;overflow:hidden;color:#000">206<span class="k">耳片（</span>181...</div><div style="left:385px;top:0;width:1px;height:21px;background:#dcdcf6"></div><div class="c" style="left:388px;width:82px;overflow:hidden;color:#000"><span class="k">箱</span></div><div style="left:471px;top:0;width:1px;height:21px;background:#dcdcf6"></div><div class="c" style="left:475px;width:92px;overflow:hidden;color:#000">1A01</div><div style="left:568px;top:0;width:1px;height:21px;background:#dcdcf6"></div><div class="c" style="left:569px;width:94px;text-align:right;color:#000">30</div><div style="left:666px;top:0;width:1px;height:21px;background:#dcdcf6"></div><div class="c" style="left:667px;width:91px;text-align:right;color:#000"></div><div style="left:16px;top:20px;width:737px;height:1px;background:#dcdcf6"></div><div style="left:0px;top:20px;width:15px;height:1px;background:#8f9aca"></div></div>
</div>
<div style="left:10px;top:680px;width:752px;height:25px;background:linear-gradient(#f1f1f8,#e6e7f1 50%,#dcdde9);border:1px solid #8f9aca;border-left:0"></div>
<div style="left:10px;top:702px;width:751px;height:1px;background:#c9cce1"></div>
<div style="left:10px;top:703px;width:751px;height:1px;background:#fbfbfe"></div>
<div style="left:10px;top:681px;width:751px;height:1px;background:#fbfbfe"></div>
<div style="left:678px;top:683px;width:80px;height:19px;background:#f4f4fa;border:1px solid #c5c9e0"></div>
<div class="t" style="left:678px;top:686px;width:77px;text-align:right">122297</div>
<div style="left:762px;top:111px;width:17px;height:594px;background:linear-gradient(90deg,#f6fafe,#fdfeff 50%,#eef6fc);border-left:1px solid #a9c6e8;border-right:1px solid #a9c6e8"></div>
<div style="left:762px;top:112px;width:17px;height:15px;border:1px solid #8db4e3;border-top-color:#5f96d6;border-radius:4px 4px 2px 2px;background:linear-gradient(90deg,#eaf4fc,#e0effb 45%,#c2dff5 50%,#9fcdef 55%,#b9daf3 85%,#cfe6f7)"></div>
<svg style="left:766px;top:116px" width="9" height="6" viewBox="0 0 9 6"><path d="M0.8 5.2 L4.5 1.5 L8.2 5.2" fill="none" stroke="#215fb0" stroke-width="2.1"/></svg>
<div style="left:762px;top:127px;width:17px;height:103px;border:1px solid #8db4e3;border-radius:4px;background:linear-gradient(90deg,#fafdff,#eaf4fc 35%,#d3e8f8 48%,#93c5ed 51%,#acd3f1 75%,#d2e7f8)"></div>
<div style="left:767px;top:176px;width:8px;height:1px;background:#2f67b4;box-shadow:0 2px 0 #2f67b4,0 4px 0 #2f67b4"></div>
<div style="left:762px;top:690px;width:17px;height:15px;border:1px solid #8db4e3;border-bottom-color:#5f96d6;border-radius:2px 2px 4px 4px;background:linear-gradient(90deg,#eaf4fc,#e0effb 45%,#c2dff5 50%,#9fcdef 55%,#b9daf3 85%,#cfe6f7)"></div>
<svg style="left:766px;top:695px" width="9" height="6" viewBox="0 0 9 6"><path d="M0.8 0.8 L4.5 4.5 L8.2 0.8" fill="none" stroke="#215fb0" stroke-width="2.1"/></svg>
<div style="left:762px;top:705px;width:18px;height:17px;background:#f7f7fb"></div>
<div style="left:9px;top:705px;width:753px;height:17px;background:linear-gradient(#f6fafe,#fdfeff 50%,#f4f9fd);border-top:1px solid #7eabdb;border-bottom:1px solid #8fb6e2"></div>
<div style="left:9px;top:705px;width:14px;height:17px;border:1px solid #8db4e3;border-left-color:#5f96d6;border-radius:4px 2px 2px 4px;background:linear-gradient(#eef6fd,#e2f0fb 45%,#c4e0f5 50%,#a2cef0 55%,#bcdcf4 85%,#d4e8f8)"></div>
<svg style="left:13px;top:709px" width="6" height="9" viewBox="0 0 6 9"><path d="M5.2 0.8 L1.5 4.5 L5.2 8.2" fill="none" stroke="#215fb0" stroke-width="2.1"/></svg>
<div style="left:23px;top:705px;width:471px;height:17px;border:1px solid #8db4e3;border-radius:4px;background:linear-gradient(#fbfdff,#eaf4fc 35%,#d3e8f8 48%,#98c8ee 52%,#b0d6f2 75%,#d6e9f9)"></div>
<div style="left:255px;top:710px;width:1px;height:7px;background:#2f67b4;box-shadow:2px 0 0 #2f67b4,4px 0 0 #2f67b4"></div>
<div style="left:748px;top:705px;width:14px;height:17px;border:1px solid #8db4e3;border-right-color:#5f96d6;border-radius:2px 4px 4px 2px;background:linear-gradient(#eef6fd,#e2f0fb 45%,#c4e0f5 50%,#a2cef0 55%,#bcdcf4 85%,#d4e8f8)"></div>
<svg style="left:752px;top:709px" width="6" height="9" viewBox="0 0 6 9"><path d="M0.8 0.8 L4.5 4.5 L0.8 8.2" fill="none" stroke="#215fb0" stroke-width="2.1"/></svg>
<div style="left:787px;top:110px;width:228px;height:614px;border:1px solid #b3b9dc;border-radius:3px;background:#f8f8fc"></div>
<div style="left:788px;top:111px;width:226px;height:20px;background:linear-gradient(#fbfbfd,#ecedf5);border-radius:3px 3px 0 0"></div>
<div class="t" style="left:799px;top:116px;font-weight:bold;letter-spacing:1px">搜索条件</div>
<div style="left:789px;top:133px;width:224px;height:197px;border:1px solid #b3b9dc;border-radius:4px;background:#f9f9fc"></div>
<div class="t" style="left:801px;top:150px;">仓库<b>:</b></div>
<div style="left:865px;top:145px;width:136px;height:21px;background:#fff;border:1px solid #aab2d8"></div>
<div class="t" style="left:801px;top:175px;">查询日期<b>:</b></div>
<div style="left:865px;top:170px;width:136px;height:21px;background:#fff;border:1px solid #aab2d8"></div>
<div class="t" style="left:801px;top:200px;">客户<b>:</b></div>
<div style="left:865px;top:195px;width:136px;height:21px;background:#fff;border:1px solid #aab2d8"></div>
<div class="t" style="left:801px;top:225px;">商品名称<b>:</b></div>
<div style="left:865px;top:220px;width:136px;height:21px;background:#fff;border:1px solid #aab2d8"></div>
<div class="t" style="left:801px;top:250px;">规格<b>:</b></div>
<div style="left:865px;top:245px;width:136px;height:21px;background:#fff;border:1px solid #aab2d8"></div>
<div class="t" style="left:801px;top:275px;">类型<b>:</b></div>
<div style="left:865px;top:270px;width:136px;height:21px;background:#fff;border:1px solid #aab2d8"></div>
<div class="t" style="left:868px;top:150px;">总仓</div>
<div class="t" style="left:868px;top:174px;letter-spacing:0.5px">2017/04/28</div>
<div class="ddb" style="left:983px;top:147px;width:16px;height:17px;"></div>
<div style="left:986px;top:154px;width:2px;height:2px;background:#2a5fb0;box-shadow:4px 0 0 #2a5fb0,8px 0 0 #2a5fb0"></div>
<div class="ddb" style="left:984px;top:172px;width:15px;height:17px;"></div>
<svg style="left:987px;top:178px" width="9" height="6" viewBox="0 0 9 6"><path d="M1.2 1 L4.5 4.3 L7.8 1" fill="none" stroke="#2a5fb0" stroke-width="2.2"/></svg>
<div class="ddb" style="left:984px;top:197px;width:15px;height:17px;"></div>
<svg style="left:987px;top:203px" width="9" height="6" viewBox="0 0 9 6"><path d="M1.2 1 L4.5 4.3 L7.8 1" fill="none" stroke="#2a5fb0" stroke-width="2.2"/></svg>
<div class="ddb" style="left:984px;top:272px;width:15px;height:17px;"></div>
<svg style="left:987px;top:278px" width="9" height="6" viewBox="0 0 9 6"><path d="M1.2 1 L4.5 4.3 L7.8 1" fill="none" stroke="#2a5fb0" stroke-width="2.2"/></svg>
<div style="left:892px;top:416px;width:101px;height:42px;border:1px solid #88aadc;border-radius:3px;background:linear-gradient(#ecf4fc,#d8e8f7 35%,#b6d4ef 55%,#a8cceb 66%,#c4ddf3 85%,#d8e9f8);box-shadow:inset 0 0 0 1px rgba(255,255,255,0.6)"></div>
<div style="left:895px;top:419px;width:96px;height:37px;border:1px dotted #000"></div>
<svg style="left:894px;top:423px" width="28" height="26" viewBox="0 0 28 26">
<defs><radialGradient id="lg" cx="0.4" cy="0.35" r="0.7"><stop offset="0" stop-color="#ffffff"/><stop offset="0.6" stop-color="#d4ecfc"/><stop offset="1" stop-color="#a8d0f0"/></radialGradient></defs>
<path d="M4.5 21 L11.5 14.5" stroke="#b87818" stroke-width="4" stroke-linecap="round"/>
<path d="M4.3 20.5 L11.3 14" stroke="#f0a838" stroke-width="2.4" stroke-linecap="round"/>
<circle cx="17.2" cy="9.7" r="6.8" fill="url(#lg)" stroke="#90a8c8" stroke-width="1.6"/>
</svg>
<div class="t" style="left:936px;top:432px;">搜索(<u>F</u>)</div>
<div style="left:4px;top:730px;width:1018px;height:30px;background:#f8f8fc"></div>
<div style="left:4px;top:731px;width:1018px;height:1px;background:#d6d9ec"></div>
<div style="left:4px;top:732px;width:1018px;height:28px;background:linear-gradient(#ffffff 0,#ffffff 1px,#f0f0f7 1px,#e9e9f3 60%,#dedfeb 25px,#dedfeb 26px,#ffffff 26px)"></div>
<div style="left:6px;top:734px;width:132px;height:23px;border:1px solid #c2c6e0;background:#f0f0f7;box-shadow:inset 0 0 0 1px #fbfbfe"></div>
<svg style="left:12px;top:736px" width="15" height="17" viewBox="0 0 15 17">
<defs><radialGradient id="ug" cx="0.45" cy="0.3" r="0.7"><stop offset="0" stop-color="#b8e0f0"/><stop offset="0.35" stop-color="#7ab8d4"/><stop offset="1" stop-color="#4a88c0"/></radialGradient></defs>
<path d="M1 16.7 C1 12.5 2.5 10.8 5 10.6 L10 10.6 C12.5 10.8 13.8 12.5 13.8 16.7 Z" fill="#5a9ac8"/>
<path d="M3.3 16.7 C3.3 13 4 11.6 5.5 11.4 L9.5 11.4 C11 11.6 11.6 13 11.6 16.7 Z" fill="#f6f6f6"/>
<circle cx="7.5" cy="5.9" r="4.7" fill="url(#ug)"/>
</svg>
<div class="t" style="left:32px;top:739px;">超级管理员</div>
<svg style="left:141px;top:736px" width="18" height="18" viewBox="0 0 18 18">
<defs><linearGradient id="og" x1="0" y1="0" x2="0" y2="1"><stop offset="0" stop-color="#f8a050"/><stop offset="0.7" stop-color="#ec7c20"/><stop offset="1" stop-color="#c85c08"/></linearGradient>
<radialGradient id="hg" cx="0.5" cy="0.3" r="0.7"><stop offset="0" stop-color="#e4c088"/><stop offset="1" stop-color="#bc8048"/></radialGradient></defs>
<path d="M1 16.8 C1 12 4 9.8 9 9.8 C14 9.8 17 12 17 16.8 Z" fill="url(#og)"/>
<path d="M8 10 L10 10 L9.8 14.6 L9 15.6 L8.2 14.6 Z" fill="#fff"/>
<ellipse cx="8.9" cy="5.6" rx="3.9" ry="4.6" fill="url(#hg)"/>
</svg>
<div class="t" style="left:162px;top:739px;">当前客户<span lang="ja" style="position:static;font-family:'Noto Sans CJK JP',sans-serif">：</span></div>
<div class="t" style="left:232px;top:739px;">(无)</div>
<svg style="left:260px;top:737px" width="16" height="16" viewBox="0 0 16 16">
<circle cx="8" cy="7.9" r="6.5" fill="#e9f1f9" stroke="#4a72aa" stroke-width="1.1"/>
<path d="M5.4 5.3 L10.6 10.5 M10.6 5.3 L5.4 10.5" stroke="#f02a08" stroke-width="2.1"/>
</svg>
<div class="t" style="left:280px;top:739px;">取消</div>
<div class="t" style="left:831px;top:739px;color:#0a5cd0">联系我们:&nbsp;</div>
<div style="left:831px;top:751px;width:184px;height:1px;background:#0a5cd0"></div>
<div class="t url" style="left:891px;top:739px;color:#0a5cd0;letter-spacing:0.75px">http://www.aolan.net</div>
</body></html>
